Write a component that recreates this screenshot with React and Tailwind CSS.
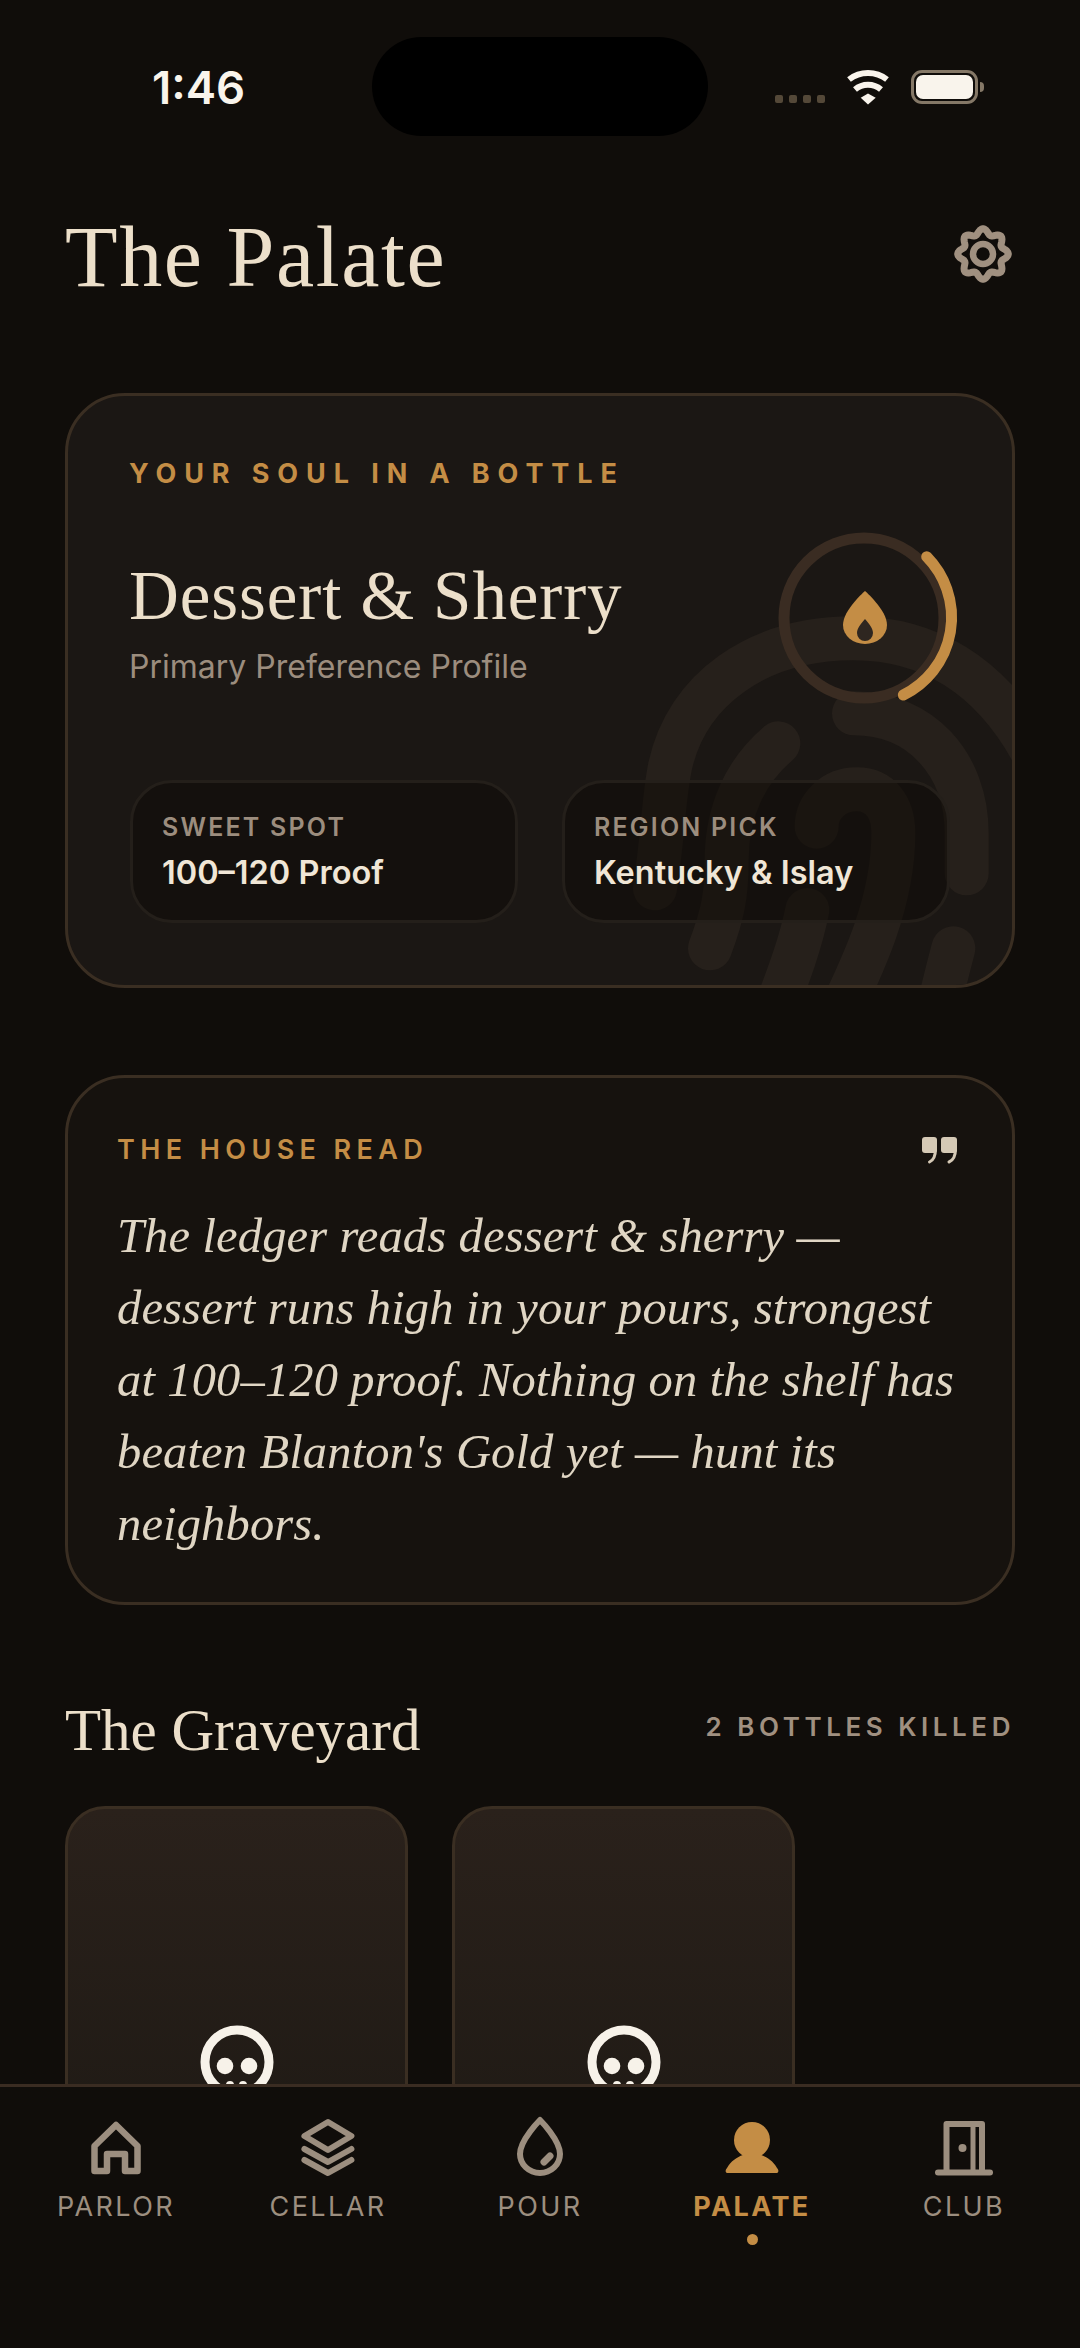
const serif = "font-['Liberation_Serif',serif]";

function gearPath() {
  const pts = [];
  for (let i = 0; i < 96; i++) {
    const a = (i / 96) * Math.PI * 2 + Math.PI / 8;
    const r = 22.5 + 2.8 * Math.cos(8 * a);
    pts.push(`${(30 + r * Math.sin(a)).toFixed(2)} ${(30 - r * Math.cos(a)).toFixed(2)}`);
  }
  return `M${pts.join("L")}Z`;
}

function StatusBar() {
  return (
    <div className="relative h-[147px] shrink-0">
      <div className="flex h-full items-start justify-between">
        <div className="ml-[152px] mt-[64px] text-[45.5px] font-semibold leading-[48px] text-[#f9f4ec]">1:46</div>
        <div className="mt-[68px] mr-[96px] flex items-start">
          <div className="mt-[27px] flex gap-[6px]">
            <span className="h-[8px] w-[8px] rounded-[2px] bg-[#544838]" />
            <span className="h-[8px] w-[8px] rounded-[2px] bg-[#544838]" />
            <span className="h-[8px] w-[8px] rounded-[2px] bg-[#544838]" />
            <span className="h-[8px] w-[8px] rounded-[2px] bg-[#544838]" />
          </div>
          <svg width="48" height="38" viewBox="846 68 48 38" className="ml-[20px]">
            <path d="M850 79.5A31 31 0 0 1 888 79.5" fill="none" stroke="#f9f4ec" strokeWidth="6" />
            <path d="M856 89.5A20 20 0 0 1 882 89.5" fill="none" stroke="#f9f4ec" strokeWidth="6" />
            <path d="M861.7 97.7L869 93.5L876.7 97.7L869 104.5Z" fill="#f9f4ec" />
          </svg>
          <div className="ml-[18px] mt-[2px] flex items-center">
            <div className="h-[34px] w-[67px] rounded-[11px] border-[3px] border-[#857867] p-[2px]">
              <div className="h-full w-full rounded-[7px] bg-[#f9f4ec]" />
            </div>
            <div className="ml-[2px] h-[10px] w-[4px] rounded-r-full bg-[#857867]" />
          </div>
        </div>
      </div>
      {/* island */}
      <div className="absolute left-[372px] top-[37px] h-[99px] w-[336px] rounded-full bg-black" />
    </div>
  );
}

function Fingerprint() {
  return (
    <svg width="440" height="520" viewBox="0 0 1320 1560" fill="none" stroke="#26201b" strokeWidth="132" strokeLinecap="round" className="absolute left-[532px] top-[104px]">
      <path d="M165 1165C190 1000 190 900 210 800C260 570 470 415 760 415C980 415 1170 520 1300 760" />
      <path d="M762 640C960 640 1100 790 1100 1000V1120" />
      <path d="M535 730C440 810 380 930 380 1080C380 1180 370 1240 330 1345" />
      <path d="M650 980C650 920 700 868 770 868C840 868 880 920 880 1000C880 1200 800 1380 680 1620" />
      <path d="M622 1230C600 1340 560 1440 500 1600" />
      <path d="M1060 1345C1040 1420 1020 1500 1000 1600" />
    </svg>
  );
}

function Ring() {
  return (
    <svg width="178" height="178" viewBox="0 0 178 178" fill="none" className="relative -mr-[4px] -mt-[27px] -mb-[21px] shrink-0 overflow-visible">
      <circle cx="88" cy="89" r="80" stroke="#3a2c22" strokeWidth="11" />
      <path d="M150.7 27.7A86.5 86.5 0 0 1 127.3 166" stroke="#c48d45" strokeWidth="11" strokeLinecap="round" />
      <path d="M89 62C89 62 67 81 67 96A22 19 0 0 0 111 96C111 81 89 62 89 62Z" fill="#c48d45" />
      <path d="M89 90C85 95 81 99 81 104A8 8 0 0 0 97 104C97 99 93 95 89 90Z" fill="#2e2620" />
    </svg>
  );
}

function Stat({ label, value }) {
  return (
    <div className="relative h-[143px] w-[388px] rounded-[42px] border-[3px] border-[#241f1a] bg-[#0d0906]/50 pl-[29px] pt-[29px]">
      <div className="text-[25px] font-semibold leading-[30px] tracking-[2.2px] text-[#9c8d7e]">{label}</div>
      <div className="mt-[11px] text-[32.5px] font-semibold leading-[40px] text-[#f0e6d6]">{value}</div>
    </div>
  );
}

function ProfileCard() {
  return (
    <section className="relative mt-[86px] overflow-hidden rounded-[60px] border-[3px] border-[#3a2e22] bg-[#1b1714] pb-[62px] pl-[61px] pr-[62px] pt-[61px]">
      <Fingerprint />
      <div className="relative text-[27px] font-bold leading-[34px] tracking-[7.9px] text-[#c48d45]">YOUR SOUL IN A BOTTLE</div>
      <div className="relative mt-[65px] flex items-start justify-between">
        <div>
          <h2 className={`${serif} text-[69px] leading-[80px] tracking-[0.9px] text-[#ecdfca]`}>Dessert &amp; Sherry</h2>
          <p className="mt-[11px] text-[32px] leading-[40px] text-[#9c8d7e]">Primary Preference Profile</p>
        </div>
        <Ring />
      </div>
      <div className="ml-[1px] mt-[93px] flex justify-between">
        <Stat label="SWEET SPOT" value="100–120 Proof" />
        <Stat label="REGION PICK" value="Kentucky & Islay" />
      </div>
    </section>
  );
}

function HouseRead() {
  return (
    <section className="mt-[87px] rounded-[60px] border-[3px] border-[#3a2e22] bg-[#16120e] pb-[42px] pl-[49px] pr-[54px] pt-[55px]">
      <div className="flex items-start justify-between">
        <div className="text-[27px] font-semibold leading-[34px] tracking-[0.2em] text-[#c48d45]">THE HOUSE READ</div>
        <svg width="36" height="27" viewBox="0 0 36 27" fill="none" className="mt-[4px]">
          <rect x="0" y="0" width="15" height="16" rx="3" fill="#d5c9b5" />
          <rect x="19" y="0" width="16" height="16" rx="3" fill="#d5c9b5" />
          <path d="M13.5 12C13.5 19 12 23 7.5 25M33.5 12C33.5 19 32 23 27 25" stroke="#d5c9b5" strokeWidth="3" strokeLinecap="round" />
        </svg>
      </div>
      <p className={`${serif} mt-[33px] text-[48.5px] italic leading-[72px] tracking-[0.15px] text-[#e0d6c4]`}>
        The ledger reads dessert &amp; sherry —<br />
        dessert runs high in your pours, strongest<br />
        at 100–120 proof. Nothing on the shelf has<br />
        beaten Blanton's Gold yet — hunt its<br />
        neighbors.
      </p>
    </section>
  );
}

function Skull() {
  return (
    <svg width="80" height="80" viewBox="0 0 80 80" fill="none">
      <circle cx="40" cy="40" r="32" stroke="#f7f2e9" strokeWidth="9" />
      <circle cx="28" cy="44" r="8.3" fill="#f7f2e9" />
      <circle cx="52" cy="44" r="8.3" fill="#f7f2e9" />
      <circle cx="33" cy="63" r="4" fill="#f7f2e9" />
      <circle cx="46" cy="63" r="4" fill="#f7f2e9" />
    </svg>
  );
}

function GraveCard() {
  return (
    <div className="flex h-[450px] w-[343px] shrink-0 justify-center rounded-[40px] border-[3px] border-[#3a2e22] bg-linear-to-b from-[#2a211b] to-[#1c1813] pt-[213px]">
      <Skull />
    </div>
  );
}

function Graveyard() {
  return (
    <section className="mt-[91px]">
      <div className="flex items-start justify-between">
        <h2 className={`${serif} text-[59px] leading-[68px] text-[#ecdfca]`}>The Graveyard</h2>
        <div className="mt-[15px] text-[26px] font-semibold leading-[32px] tracking-[4.55px] text-[#a09080]">2 BOTTLES KILLED</div>
      </div>
      <div className="mt-[42px] flex gap-[44px]">
        <GraveCard />
        <GraveCard />
      </div>
    </section>
  );
}

const navIcons = {
  parlor: (
    <path d="M14.5 55V30L36 9L57.5 30V55H45V38H27V55Z" stroke="currentColor" strokeWidth="6.5" strokeLinejoin="round" />
  ),
  cellar: (
    <g stroke="currentColor" strokeWidth="6" strokeLinecap="round" strokeLinejoin="round">
      <path d="M12.4 20L36 6L59.4 20L36 34Z" />
      <path d="M12.4 33L36 46L59.4 33" />
      <path d="M12.4 44L36 57L59.4 44" />
    </g>
  ),
  pour: (
    <g stroke="currentColor" strokeWidth="6" strokeLinecap="round" strokeLinejoin="round">
      <path d="M36 4C36 4 16 24 16 38A20 19 0 0 0 56 38C56 24 36 4 36 4Z" />
      <path d="M40 46L46 40" strokeWidth="7" />
    </g>
  ),
  palate: (
    <g fill="currentColor">
      <circle cx="36" cy="24" r="18" />
      <path d="M12 57C9 57 9 54 11 52C15 45 21 41 27 39H45C51 41 57 45 61 52C63 54 63 57 60 57Z" />
    </g>
  ),
  club: (
    <g stroke="currentColor" strokeWidth="6" strokeLinecap="round" strokeLinejoin="round">
      <path d="M18.5 56V8H54V56" />
      <path d="M10 56.5H62" />
      <path d="M45 8V56" strokeWidth="5" />
      <circle cx="34.5" cy="32" r="4" fill="currentColor" stroke="none" />
    </g>
  ),
};

const tabs = [
  { id: "parlor", label: "PARLOR" },
  { id: "cellar", label: "CELLAR" },
  { id: "pour", label: "POUR" },
  { id: "palate", label: "PALATE", active: true },
  { id: "club", label: "CLUB" },
];

function BottomNav() {
  return (
    <nav className="grid h-[264px] shrink-0 grid-cols-5 border-t-[3px] border-[#3a2c22] bg-[#100d0a] px-[10px] pt-[29px]">
      {tabs.map((tab) => (
        <div key={tab.id} className={`flex flex-col items-center ${tab.active ? "text-[#c48d45]" : "text-[#9c8e7f]"}`}>
          <svg width="72" height="64" viewBox="0 0 72 64" fill="none">
            {navIcons[tab.id]}
          </svg>
          <div className={`mt-[10px] text-[27px] leading-[34px] tracking-[2.4px] ${tab.active ? "font-bold" : "font-normal"}`}>{tab.label}</div>
          {tab.active && <span className="mt-[10px] h-[11px] w-[11px] rounded-full bg-[#c48d45]" />}
        </div>
      ))}
    </nav>
  );
}

export default function App() {
  return (
    <div className="flex h-[2348px] flex-col overflow-hidden bg-[#100d0a] font-['Inter',sans-serif]">
      <StatusBar />
      <main className="min-h-0 flex-1 overflow-hidden px-[65px] pt-[60px]">
        <header className="flex items-center justify-between">
          <h1 className={`${serif} text-[86px] leading-[100px] tracking-[1.6px] text-[#ecdfca]`}>The Palate</h1>
          <svg width="60" height="60" viewBox="0 0 60 60" fill="none" stroke="#a09080" className="mr-[2px] -mt-[6px]">
            <path d={gearPath()} strokeWidth="7" strokeLinejoin="round" />
            <circle cx="30" cy="30" r="10" strokeWidth="6.5" />
          </svg>
        </header>
        <ProfileCard />
        <HouseRead />
        <Graveyard />
      </main>
      <BottomNav />
    </div>
  );
}
